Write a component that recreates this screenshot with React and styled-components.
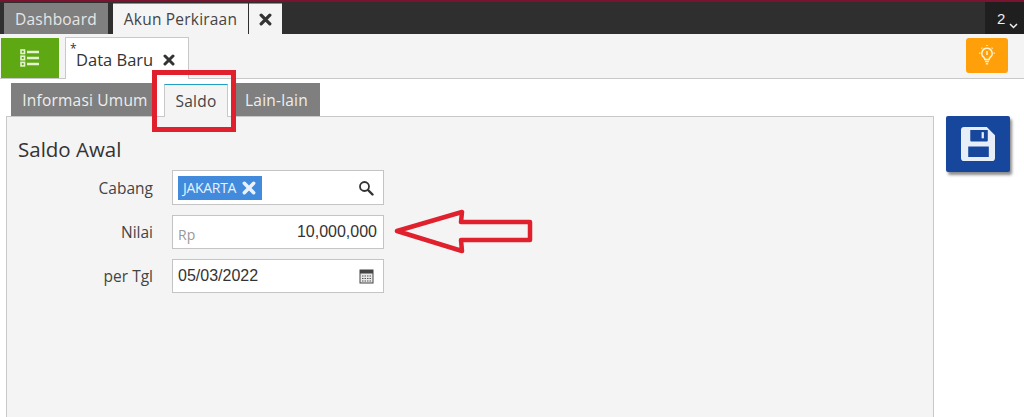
import React from "react";
import styled, { createGlobalStyle } from "styled-components";

const Global = createGlobalStyle`
  html, body { margin: 0; padding: 0; background: #fff; }
  #root { width: 1024px; height: 417px; overflow: hidden; }
  * { box-sizing: border-box; }
`;

const Page = styled.div`
  position: relative;
  width: 1024px;
  height: 417px;
  overflow: hidden;
  display: flex;
  flex-direction: column;
  font-family: "Open Sans", "Noto Sans", sans-serif;
  color: #333;
  background: #fff;
`;

const TopBar = styled.header`
  height: 34px;
  flex: none;
  display: flex;
  align-items: flex-end;
  padding-left: 4px;
  background: #2f2f2f;
  border-top: 2px solid #7a1230;
`;

const MainTab = styled.div`
  height: 31px;
  display: flex;
  align-items: center;
  justify-content: center;
  width: ${p => p.$w}px;
  margin-left: ${p => p.$ml || 0}px;
  font-size: 15.5px;
  letter-spacing: 0.2px;
  color: ${p => (p.$active ? "#444" : "#e6e6e6")};
  background: ${p => (p.$active ? "#f4f4f4" : "#7f7f7f")};
  border-top: ${p => (p.$active ? "1px solid #5b9bd5" : "none")};
`;

const Counter = styled.div`
  margin-left: auto;
  width: 39px;
  height: 32px;
  background: #1f1f1f;
  color: #eee;
  font-family: "Liberation Sans", sans-serif;
  font-size: 15px;
  display: flex;
  align-items: flex-start;
  padding: 8px 0 0 12px;
  gap: 4px;
`;

const Chevron = styled.svg`
  width: 9px;
  height: 6px;
  margin-top: 13px;
`;

const SubBar = styled.div`
  height: 45px;
  flex: none;
  display: flex;
  align-items: flex-end;
  padding-left: 1px;
  background: #f4f4f4;
  border-bottom: 1px solid #c8c8c8;
`;

const GreenButton = styled.div`
  width: 58px;
  height: 40px;
  background: #5ea813;
  display: flex;
  align-items: center;
  justify-content: center;
`;

const DocTab = styled.div`
  position: relative;
  width: 124px;
  height: 42px;
  margin-left: 6px;
  margin-bottom: -1px;
  background: #fff;
  border: 1px solid #c8c8c8;
  border-bottom: none;
  display: flex;
  align-items: center;
  padding: 2px 0 0 10px;
  gap: 10px;
  font-size: 16.5px;
  color: #333;
`;

const Star = styled.span`
  position: absolute;
  left: 4px;
  top: 2px;
  font-size: 12px;
`;

const OrangeButton = styled.div`
  width: 42px;
  height: 35px;
  margin: 0 16px 5px auto;
  border-radius: 3px;
  background: #ffa00a;
  display: flex;
  align-items: center;
  justify-content: center;
`;

const Body = styled.div`
  flex: 1;
  display: flex;
  padding-left: 6px;
  min-height: 0;
`;

const Left = styled.div`
  width: 928px;
  display: flex;
  flex-direction: column;
`;

const TabRow = styled.div`
  height: 37px;
  flex: none;
  display: flex;
  align-items: flex-end;
  padding-left: 5px;
`;

const FormTab = styled.div`
  position: relative;
  z-index: 1;
  width: ${p => p.$w}px;
  margin-left: ${p => p.$ml || 0}px;
  margin-bottom: ${p => (p.$active ? -1 : 0)}px;
  padding-left: ${p => p.$pl || 0}px;
  padding-right: ${p => p.$pr || 0}px;
  height: 33px;
  display: flex;
  align-items: center;
  justify-content: center;
  font-size: 15.5px;
  letter-spacing: 0.2px;
  color: ${p => (p.$active ? "#444" : "#eee")};
  background: ${p => (p.$active ? "#f4f4f4" : "#7f7f7f")};
  border-left: ${p => (p.$active ? "1px solid #c8c8c8" : "none")};
  border-right: ${p => (p.$active ? "1px solid #c8c8c8" : "none")};
  border-top: ${p => (p.$active ? "1px solid #1f9fc4" : "none")};
`;

const Panel = styled.section`
  flex: 1;
  background: #f4f4f4;
  border: 1px solid #c8c8c8;
  border-bottom: none;
  padding: 17px 0 0 11px;
`;

const Heading = styled.h2`
  margin: 0 0 6px;
  font-size: 20.5px;
  line-height: 30px;
  font-weight: 400;
  color: #333;
`;

const Row = styled.div`
  display: flex;
  align-items: center;
  height: ${p => p.$h}px;
  margin-bottom: 10px;
`;

const Label = styled.label`
  width: 135px;
  text-align: right;
  font-size: 15.5px;
  color: #444;
`;

const Field = styled.div`
  width: 212px;
  height: 100%;
  margin-left: 19px;
  background: #fff;
  border: 1px solid #c4c4c4;
  display: flex;
  align-items: center;
  justify-content: space-between;
  padding: 0 6px 0 5px;
  font-family: "Liberation Sans", sans-serif;
  font-size: 16px;
  color: #333;
`;

const FieldIcon = styled.svg`
  margin-right: 3px;
`;

const Chip = styled.span`
  height: 24px;
  width: 84px;
  background: #428bdc;
  color: #e8f2fc;
  font-family: "Open Sans", sans-serif;
  font-size: 14px;
  display: flex;
  align-items: center;
  padding-left: 5px;
  gap: 6px;
  letter-spacing: -0.3px;
`;

const Prefix = styled.span`
  color: #999;
  font-family: "Open Sans", sans-serif;
  font-size: 14px;
  padding-top: 4px;
`;

const Side = styled.div`
  padding: 37px 0 0 12px;
`;

const SaveButton = styled.div`
  width: 64px;
  height: 56px;
  background: #17479c;
  border-radius: 2px;
  box-shadow: 2px 3px 3px rgba(0, 0, 0, 0.45);
  display: flex;
  align-items: center;
  justify-content: center;
`;

const Highlight = styled.div`
  position: absolute;
  z-index: 2;
  left: 152px;
  top: 70px;
  width: 84px;
  height: 62px;
  border: 5px solid #e0202c;
`;

const ArrowMark = styled.svg`
  position: absolute;
  z-index: 2;
  left: 390px;
  top: 206px;
  width: 146px;
  height: 50px;
`;

const Close = ({ size = 12, color = "#333" }) => (
  <svg width={size} height={size} viewBox="0 0 12 12">
    <path d="M2 2 L10 10 M10 2 L2 10" stroke={color} strokeWidth="3" strokeLinecap="round" />
  </svg>
);

export default function App() {
  return (
    <Page>
      <Global />
      <TopBar>
        <MainTab $w={104}>Dashboard</MainTab>
        <MainTab $w={135} $ml={5} $active>Akun Perkiraan</MainTab>
        <MainTab $w={33} $ml={1} $active><Close size={13} /></MainTab>
        <Counter>
          2
          <Chevron viewBox="0 0 9 6"><path d="M1 1 L4.5 4.5 L8 1" fill="none" stroke="#eee" strokeWidth="1.5" /></Chevron>
        </Counter>
      </TopBar>

      <SubBar>
        <GreenButton>
          <svg width="20" height="18" viewBox="0 0 20 18" fill="none" stroke="#e4f3d0">
            <rect x="1" y="1" width="3.5" height="3.5" strokeWidth="1.6" />
            <rect x="1" y="7.2" width="3.5" height="3.5" strokeWidth="1.6" />
            <rect x="1" y="13.4" width="3.5" height="3.5" strokeWidth="1.6" />
            <path d="M7 3 H19 M7 9 H19 M7 15 H19" strokeWidth="2.4" />
          </svg>
        </GreenButton>
        <DocTab>
          <Star>*</Star>
          Data Baru
          <Close size={12} />
        </DocTab>
        <OrangeButton>
          <svg width="18" height="22" viewBox="0 0 16 20" fill="none" stroke="#fff3cf" strokeWidth="1.4">
            <path d="M8 3 a4.6 4.6 0 0 1 2.8 8.3 c-.6.5-.8 1-.8 1.9 H6 c0-.9-.2-1.4-.8-1.9 A4.6 4.6 0 0 1 8 3 Z" />
            <path d="M6.3 15 H9.7 M7 17 H9" />
            <path d="M8 5.5 V9" />
            <path d="M1 7.5 H2 M14 7.5 H15 M3 2.5 L3.7 3.2 M13 2.5 L12.3 3.2 M8 0 V1" />
          </svg>
        </OrangeButton>
      </SubBar>

      <Body>
        <Left>
          <TabRow>
            <FormTab $w={141} $pl={7}>Informasi Umum</FormTab>
            <FormTab $w={64} $ml={12} $active>Saldo</FormTab>
            <FormTab $w={84} $ml={8} $pr={3}>Lain-lain</FormTab>
          </TabRow>
          <Panel>
            <Heading>Saldo Awal</Heading>
            <Row $h={35}>
              <Label>Cabang</Label>
              <Field>
                <Chip>JAKARTA <Close size={14} color="#eaf3fd" /></Chip>
                <FieldIcon width="16" height="16" viewBox="0 0 16 16" fill="none" stroke="#333">
                  <circle cx="6.5" cy="6.5" r="4.5" strokeWidth="1.8" />
                  <path d="M10 10 L14.5 14.5" strokeWidth="2.4" strokeLinecap="round" />
                </FieldIcon>
              </Field>
            </Row>
            <Row $h={34}>
              <Label>Nilai</Label>
              <Field>
                <Prefix>Rp</Prefix>
                10,000,000
              </Field>
            </Row>
            <Row $h={34}>
              <Label>per Tgl</Label>
              <Field>
                05/03/2022
                <FieldIcon width="15" height="16" viewBox="0 0 15 16">
                  <rect x="1" y="2" width="13" height="13" fill="#e8e8e8" stroke="#444" />
                  <rect x="1" y="2" width="13" height="3.5" fill="#444" />
                  <path d="M3 8 H12 M3 10.5 H12 M3 13 H12" stroke="#555" strokeWidth="1.2" strokeDasharray="1.5 1" />
                </FieldIcon>
              </Field>
            </Row>
          </Panel>
        </Left>
        <Side>
          <SaveButton>
            <svg width="34" height="34" viewBox="0 0 33 33">
              <path fillRule="evenodd" fill="#e8eef8" d="M3 0 H25 L33 8 V30 a3 3 0 0 1 -3 3 H3 a3 3 0 0 1 -3 -3 V3 a3 3 0 0 1 3 -3 Z M9 3 V13 a1 1 0 0 0 1 1 H25 a1 1 0 0 0 1 -1 V3 Z M7 19 V29 H27 V19 Z" />
              <rect x="20" y="5" width="2.2" height="6" fill="#e8eef8" />
            </svg>
          </SaveButton>
        </Side>
      </Body>

      <Highlight />
      <ArrowMark viewBox="0 0 146 50">
        <path d="M7 25 L72 6 L71 16 L140 16 L140 34 L71 34 L72 45 Z" fill="none" stroke="#e0202c" strokeWidth="4.5" strokeLinejoin="round" />
      </ArrowMark>
    </Page>
  );
}
